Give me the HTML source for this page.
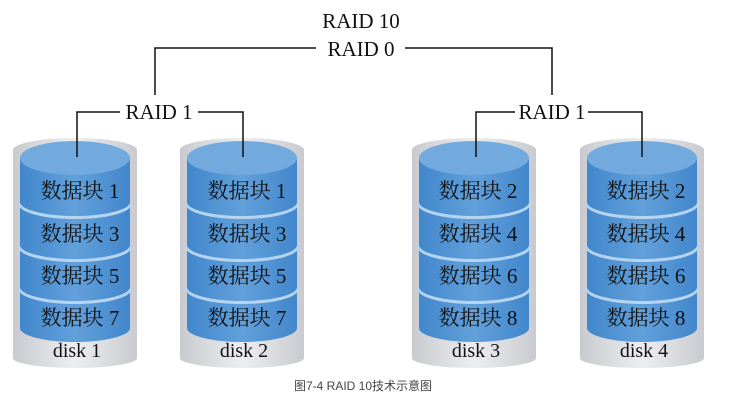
<!DOCTYPE html>
<html><head><meta charset="utf-8"><style>
html,body{margin:0;padding:0;background:#fff;width:731px;height:404px;overflow:hidden}
svg{display:block}
.t{font-family:"Liberation Serif","Noto Serif CJK SC",serif;fill:#111}
.c{font-family:"Liberation Sans","Noto Sans CJK SC",sans-serif;fill:#444;font-size:12px}
</style></head><body>
<svg width="731" height="404" viewBox="0 0 731 404" xmlns="http://www.w3.org/2000/svg">
<defs>
<linearGradient id="gr" x1="0" x2="1"><stop offset="0" stop-color="#c9cacf"/><stop offset="0.5" stop-color="#eceef1"/><stop offset="1" stop-color="#c9cacf"/></linearGradient>
<linearGradient id="bl" x1="0" x2="1"><stop offset="0" stop-color="#4187cc"/><stop offset="0.5" stop-color="#62a0da"/><stop offset="1" stop-color="#4187cc"/></linearGradient>
<g id="disk">
<path d="M-62,150 L-62,358 A62 10 0 0 0 62,358 L62,150 A62 12 0 0 0 -62,150 Z" fill="url(#gr)"/>
<path d="M-55,287 L-55,328 A55 14 0 0 0 55,328 L55,287 Z" fill="url(#bl)"/>
<path d="M-55,288 A55 14 0 0 0 55,288" fill="none" stroke="#b5d4f0" stroke-width="4"/>
<path d="M-55,245 L-55,287 A55 14 0 0 0 55,287 L55,245 Z" fill="url(#bl)"/>
<path d="M-55,246 A55 14 0 0 0 55,246" fill="none" stroke="#b5d4f0" stroke-width="4"/>
<path d="M-55,202 L-55,245 A55 14 0 0 0 55,245 L55,202 Z" fill="url(#bl)"/>
<path d="M-55,203 A55 14 0 0 0 55,203" fill="none" stroke="#b5d4f0" stroke-width="4"/>
<path d="M-55,158 L-55,202 A55 14 0 0 0 55,202 L55,158 Z" fill="url(#bl)"/>
<ellipse cx="0" cy="158" rx="55" ry="17" fill="#72aade"/>
</g>
</defs>
<use href="#disk" x="75"/>
<use href="#disk" x="242"/>
<use href="#disk" x="474"/>
<use href="#disk" x="642"/>
<g stroke="#111" stroke-width="1.5" fill="none">
<path d="M155,95 V48 H316 M405,48 H552 V95"/>
<path d="M77,157 V112 H120 M198,112 H243 V157"/>
<path d="M476,157 V112 H515 M588,112 H642 V157"/>
</g>
<g class="t" text-anchor="middle" font-size="21">
<text x="361" y="28">RAID 10</text>
<text x="361" y="56">RAID 0</text>
<text x="159" y="119">RAID 1</text>
<text x="552" y="119">RAID 1</text>
</g>
<g class="t" text-anchor="middle" font-size="21">
<text x="80" y="198">数据块 1</text><text x="80" y="241">数据块 3</text><text x="80" y="283">数据块 5</text><text x="80" y="325">数据块 7</text>
<text x="247" y="198">数据块 1</text><text x="247" y="241">数据块 3</text><text x="247" y="283">数据块 5</text><text x="247" y="325">数据块 7</text>
<text x="478" y="198">数据块 2</text><text x="478" y="241">数据块 4</text><text x="478" y="283">数据块 6</text><text x="478" y="325">数据块 8</text>
<text x="646" y="198">数据块 2</text><text x="646" y="241">数据块 4</text><text x="646" y="283">数据块 6</text><text x="646" y="325">数据块 8</text>
<text x="77" y="357" font-size="20">disk 1</text><text x="244" y="357" font-size="20">disk 2</text><text x="476" y="357" font-size="20">disk 3</text><text x="644" y="357" font-size="20">disk 4</text>
</g>
<text class="c" x="363" y="390" text-anchor="middle">图7-4  RAID 10技术示意图</text>
</svg>
</body></html>
